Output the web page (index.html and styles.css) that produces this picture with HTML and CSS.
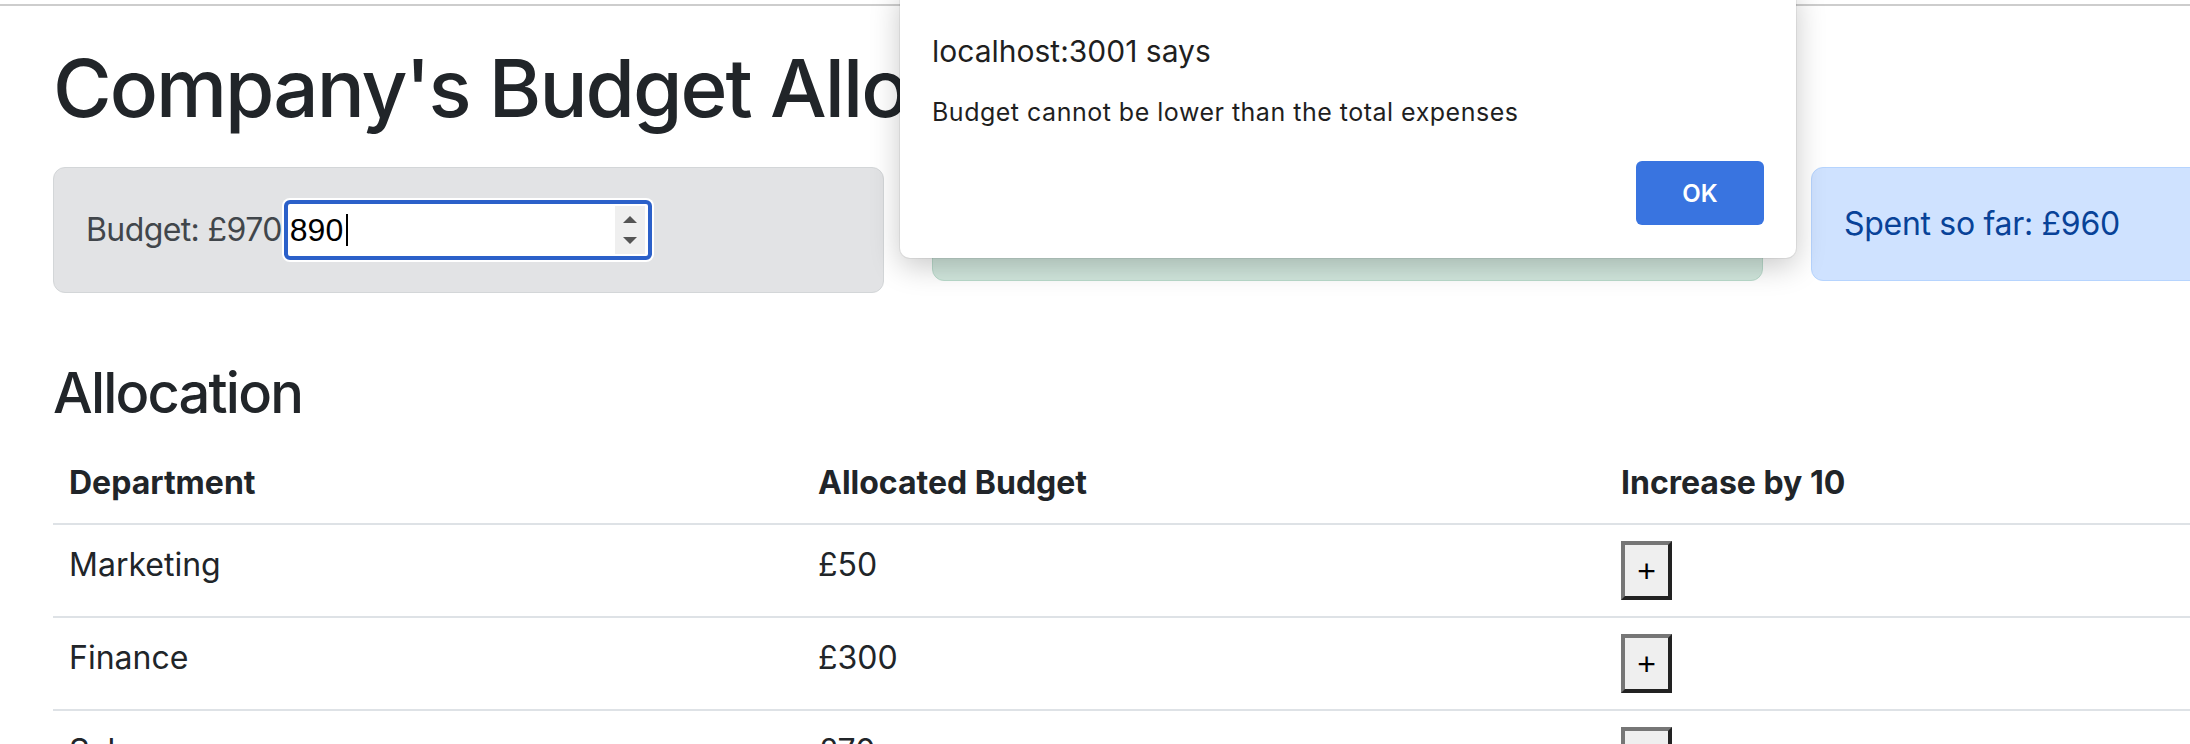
FILE: index.html
```html
<!DOCTYPE html>
<html lang="en">
<head>
<meta charset="utf-8">
<title>Company's Budget Allocation</title>
<link rel="stylesheet" href="styles.css">
</head>
<body>
<div class="browser-edge"></div>
<main class="app">
  <h1 class="title">Company's Budget Allocation</h1>
  <div class="summary">
    <div class="alert alert-secondary budget">
      <span class="budget-label">Budget: £970</span>
      <div class="num-input">
        <span class="num-value">890</span><span class="caret"></span>
        <span class="spinner"><span class="arrow up"></span><span class="arrow down"></span></span>
      </div>
    </div>
    <div class="alert alert-success">Remaining: £10</div>
    <div class="alert alert-primary">Spent so far: £960</div>
  </div>
  <h3 class="section-title">Allocation</h3>
  <table class="alloc-table">
    <colgroup><col class="c1"><col class="c2"><col class="c3"></colgroup>
    <thead>
      <tr><th>Department</th><th>Allocated Budget</th><th>Increase by 10</th></tr>
    </thead>
    <tbody>
      <tr><td>Marketing</td><td>£50</td><td><button class="plus">+</button></td></tr>
      <tr><td>Finance</td><td>£300</td><td><button class="plus">+</button></td></tr>
      <tr><td>Sales</td><td>£70</td><td><button class="plus">+</button></td></tr>
      <tr><td>Human Resource</td><td>£40</td><td><button class="plus">+</button></td></tr>
      <tr><td>IT</td><td>£500</td><td><button class="plus">+</button></td></tr>
    </tbody>
  </table>
</main>
<div class="dialog" role="alertdialog">
  <div class="dialog-title">localhost:3001 says</div>
  <div class="dialog-msg">Budget cannot be lower than the total expenses</div>
  <div class="dialog-actions"><button class="ok-btn">OK</button></div>
</div>
</body>
</html>
```

FILE: styles.css
```css
* { box-sizing: border-box; }
html, body {
  margin: 0;
  padding: 0;
  overflow: hidden;
  background: #fff;
}
body {
  width: 2190px;
  height: 744px;
  position: relative;
  font-family: Inter, "Noto Sans", sans-serif;
  font-size: 32px;
  line-height: 1.5;
  color: #212529;
}
.browser-edge {
  height: 2px;
  margin-top: 4px;
  background: #cdcdcd;
}
.app {
  width: 2700px;
  padding: 34px 0 0 53px;
}
.title {
  margin: 0;
  font-size: 80px;
  font-weight: 500;
  line-height: 1.2;
  letter-spacing: -2px;
}
.summary {
  display: grid;
  grid-template-columns: repeat(3, 831px);
  column-gap: 48px;
  align-items: start;
  margin-top: 31px;
}
.alert {
  padding: 32px;
  border: 1px solid transparent;
  border-radius: 12px;
}
.alert-secondary {
  background: #e2e3e5;
  border-color: #d3d6d8;
  color: #41464b;
}
.alert-success {
  background: #d1e7dd;
  border-color: #badbcc;
  color: #0f5132;
}
.alert-primary {
  background: #cfe2ff;
  border-color: #b6d4fe;
  color: #084298;
  letter-spacing: -0.3px;
}
.budget {
  display: flex;
  align-items: center;
}
.budget-label { letter-spacing: -0.6px; }
.num-input {
  width: 368px;
  height: 60px;
  margin-left: 2px;
  display: flex;
  align-items: center;
  background: #fff;
  border: 4px solid #2b60c9;
  border-radius: 6px;
  box-shadow: 0 0 0 2px #fff;
  padding: 0 3px 0 2px;
  font-family: "Liberation Sans", Arial, sans-serif;
  font-size: 32px;
  color: #000;
}
.num-value { line-height: 1; }
.caret {
  width: 2px;
  height: 32px;
  margin-left: 3px;
  background: #000;
}
.spinner {
  margin-left: auto;
  width: 30px;
  height: 48px;
  background: #efefef;
  display: flex;
  flex-direction: column;
  align-items: center;
  justify-content: center;
  gap: 14px;
}
.arrow {
  width: 0;
  height: 0;
  border-left: 7px solid transparent;
  border-right: 7px solid transparent;
}
.arrow.up { border-bottom: 7px solid #555; }
.arrow.down { border-top: 7px solid #555; }

.section-title {
  margin: 67px 0 16px;
  font-size: 56px;
  font-weight: 500;
  line-height: 1.2;
  letter-spacing: -1.8px;
}
.alloc-table {
  width: 2590px;
  border-collapse: collapse;
  table-layout: fixed;
}
.alloc-table .c1 { width: 749px; }
.alloc-table .c2 { width: 803px; }
.alloc-table th,
.alloc-table td {
  padding: 16px;
  text-align: left;
  vertical-align: top;
  border-bottom: 2px solid #dee2e6;
}
.alloc-table th { font-weight: 700; }
.plus {
  width: 51px;
  height: 59px;
  padding: 0;
  display: flex;
  align-items: center;
  justify-content: center;
  background: #efefef;
  border: 4px solid;
  border-color: #767676 #222 #222 #767676;
  font-family: "Liberation Sans", Arial, sans-serif;
  font-size: 32px;
  line-height: 1;
  color: #000;
}

.dialog {
  position: absolute;
  left: 900px;
  top: -14px;
  width: 896px;
  height: 272px;
  padding: 47px 32px 0;
  background: #fff;
  border-radius: 10px;
  box-shadow: 0 8px 30px rgba(0, 0, 0, 0.22), 0 0 0 1px rgba(0, 0, 0, 0.06);
  color: #1f1f1f;
}
.dialog-title {
  font-size: 30px;
  line-height: 36px;
}
.dialog-msg {
  margin-top: 28px;
  font-size: 25px;
  line-height: 30px;
  letter-spacing: 0.5px;
}
.dialog-actions {
  display: flex;
  justify-content: flex-end;
  margin-top: 34px;
}
.ok-btn {
  width: 128px;
  height: 64px;
  border: none;
  border-radius: 6px;
  background: #3974e0;
  color: #fff;
  font-family: Inter, "Noto Sans", sans-serif;
  font-size: 24px;
  font-weight: 600;
}
```
